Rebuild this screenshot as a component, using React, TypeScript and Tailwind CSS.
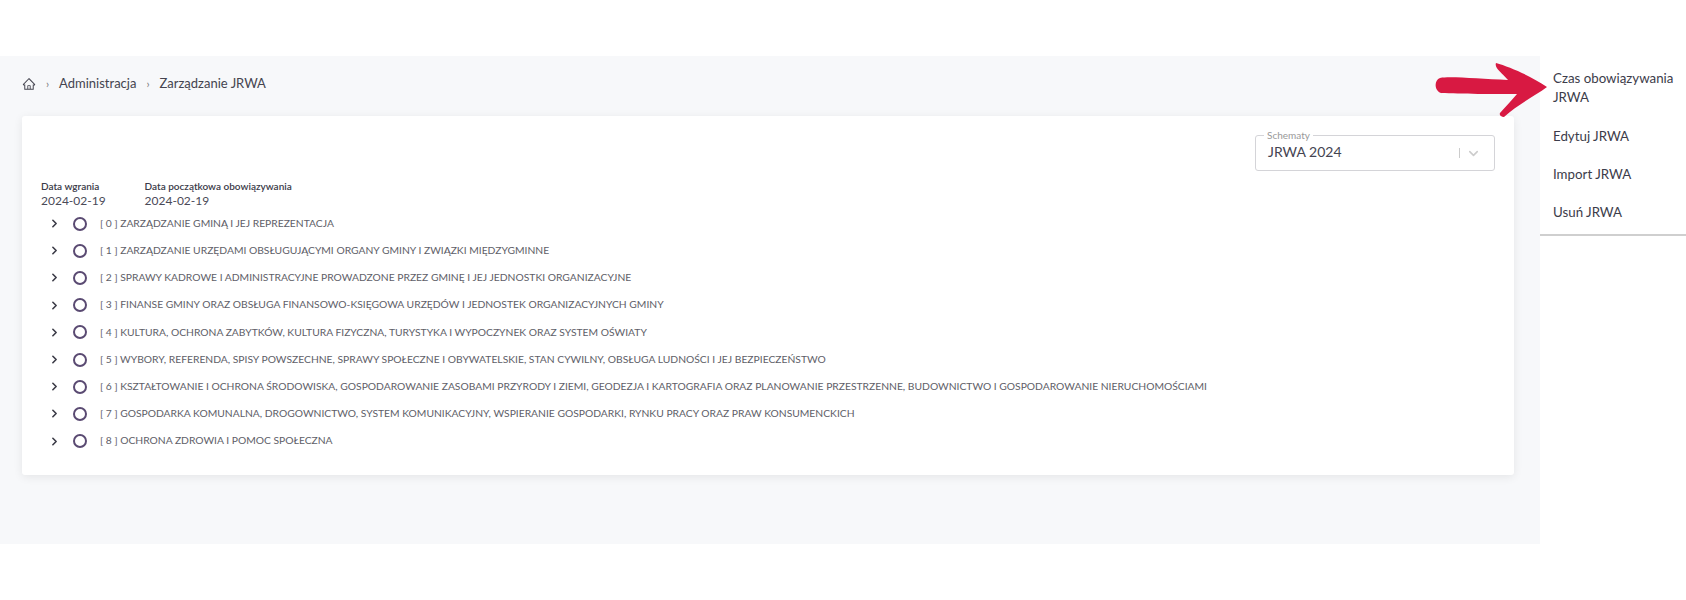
import { ChevronDown, ChevronRight } from "lucide-react";
import { AiOutlineHome } from "react-icons/ai";

const rows = [
  "[ 0 ] ZARZĄDZANIE GMINĄ I JEJ REPREZENTACJA",
  "[ 1 ] ZARZĄDZANIE URZĘDAMI OBSŁUGUJĄCYMI ORGANY GMINY I ZWIĄZKI MIĘDZYGMINNE",
  "[ 2 ] SPRAWY KADROWE I ADMINISTRACYJNE PROWADZONE PRZEZ GMINĘ I JEJ JEDNOSTKI ORGANIZACYJNE",
  "[ 3 ] FINANSE GMINY ORAZ OBSŁUGA FINANSOWO-KSIĘGOWA URZĘDÓW I JEDNOSTEK ORGANIZACYJNYCH GMINY",
  "[ 4 ] KULTURA, OCHRONA ZABYTKÓW, KULTURA FIZYCZNA, TURYSTYKA I WYPOCZYNEK ORAZ SYSTEM OŚWIATY",
  "[ 5 ] WYBORY, REFERENDA, SPISY POWSZECHNE, SPRAWY SPOŁECZNE I OBYWATELSKIE, STAN CYWILNY, OBSŁUGA LUDNOŚCI I JEJ BEZPIECZEŃSTWO",
  "[ 6 ] KSZTAŁTOWANIE I OCHRONA ŚRODOWISKA, GOSPODAROWANIE ZASOBAMI PRZYRODY I ZIEMI, GEODEZJA I KARTOGRAFIA ORAZ PLANOWANIE PRZESTRZENNE, BUDOWNICTWO I GOSPODAROWANIE NIERUCHOMOŚCIAMI",
  "[ 7 ] GOSPODARKA KOMUNALNA, DROGOWNICTWO, SYSTEM KOMUNIKACYJNY, WSPIERANIE GOSPODARKI, RYNKU PRACY ORAZ PRAW KONSUMENCKICH",
  "[ 8 ] OCHRONA ZDROWIA I POMOC SPOŁECZNA",
];

function DateField({ label, value }: { label: string; value: string }) {
  return (
    <div>
      <div className="text-[10px] leading-[14px] font-semibold text-[#3a3a48]">{label}</div>
      <div className="text-[12px] leading-[16px] text-[#4a4a58]">{value}</div>
    </div>
  );
}

function Arrow() {
  return (
    <svg className="absolute left-[1435px] top-[62px]" width="114" height="56" viewBox="0 0 114 56">
      <path
        d="M5 16C15 14 45 17 73 18C67 11 59 6 61 1C75 5 96 14 112 25C100 34 83 42 69 55C66 55 64 53 65 51C71 44 77 38 82 32C60 32 25 32 6 31C-1 29 -1 18 5 16Z"
        fill="#d81942"
      />
    </svg>
  );
}

export default function App() {
  return (
    <div className="relative h-[600px] bg-white pt-14 font-['Lato','Noto_Sans',sans-serif] text-[#33333f]">
      <div className="flex items-start">
        <div className="h-[488px] w-[1540px] bg-[#f7f8fa] px-[22px]">
          <nav className="flex h-[60px] items-center pb-[4px] text-[13px] text-[#44444f]">
            <AiOutlineHome size={14} />
            <span className="mx-[10px] text-[11px] text-[#777]">›</span>
            <span>Administracja</span>
            <span className="mx-[10px] text-[11px] text-[#777]">›</span>
            <span>Zarządzanie JRWA</span>
          </nav>
          <div className="h-[359px] w-[1492px] rounded-[3px] bg-white px-[19px] pt-[19px] shadow-[0_2px_10px_rgba(0,0,0,0.08)]">
            <div className="flex justify-end">
              <div className="relative flex h-[36px] w-[240px] items-center rounded-[3px] border border-[#d4d4d8] pr-[13px] pl-[12px]">
                <span className="absolute -top-[7px] left-[8px] bg-white px-[3px] text-[10px] leading-[12px] text-[#999]">
                  Schematy
                </span>
                <span className="flex-1 pb-[4px] text-[14px] text-[#444452]">JRWA 2024</span>
                <span className="mr-[6px] h-[10px] w-px bg-[#ccc]" />
                <ChevronDown size={15} strokeWidth={2.5} className="text-[#ccc]" />
              </div>
            </div>
            <div className="mt-[8px] flex gap-[39px]">
              <DateField label="Data wgrania" value="2024-02-19" />
              <DateField label="Data początkowa obowiązywania" value="2024-02-19" />
            </div>
            <ul className="mt-[1px]">
              {rows.map((row) => (
                <li key={row} className="flex h-[27.2px] items-center">
                  <ChevronRight size={13} strokeWidth={3} className="ml-[7px] text-[#3c3c48]" />
                  <span className="ml-[12px] h-[14px] w-[14px] rounded-full border-2 border-[#5a4a72]" />
                  <span className="ml-[13px] whitespace-nowrap text-[10.3px] text-[#5e5e68]">{row}</span>
                </li>
              ))}
            </ul>
          </div>
        </div>
        <aside className="w-[146px] text-[13.3px] text-[#3c3c4a]">
          <div className="border-b-2 border-[#cfcfcf] pt-[13px] pr-[8px] pb-[12px] pl-[13px]">
            <div className="leading-[19px]">Czas obowiązywania JRWA</div>
            <div className="mt-[20px] leading-[19px]">Edytuj JRWA</div>
            <div className="mt-[19px] leading-[19px]">Import JRWA</div>
            <div className="mt-[19px] leading-[19px]">Usuń JRWA</div>
          </div>
        </aside>
      </div>
      <Arrow />
    </div>
  );
}
